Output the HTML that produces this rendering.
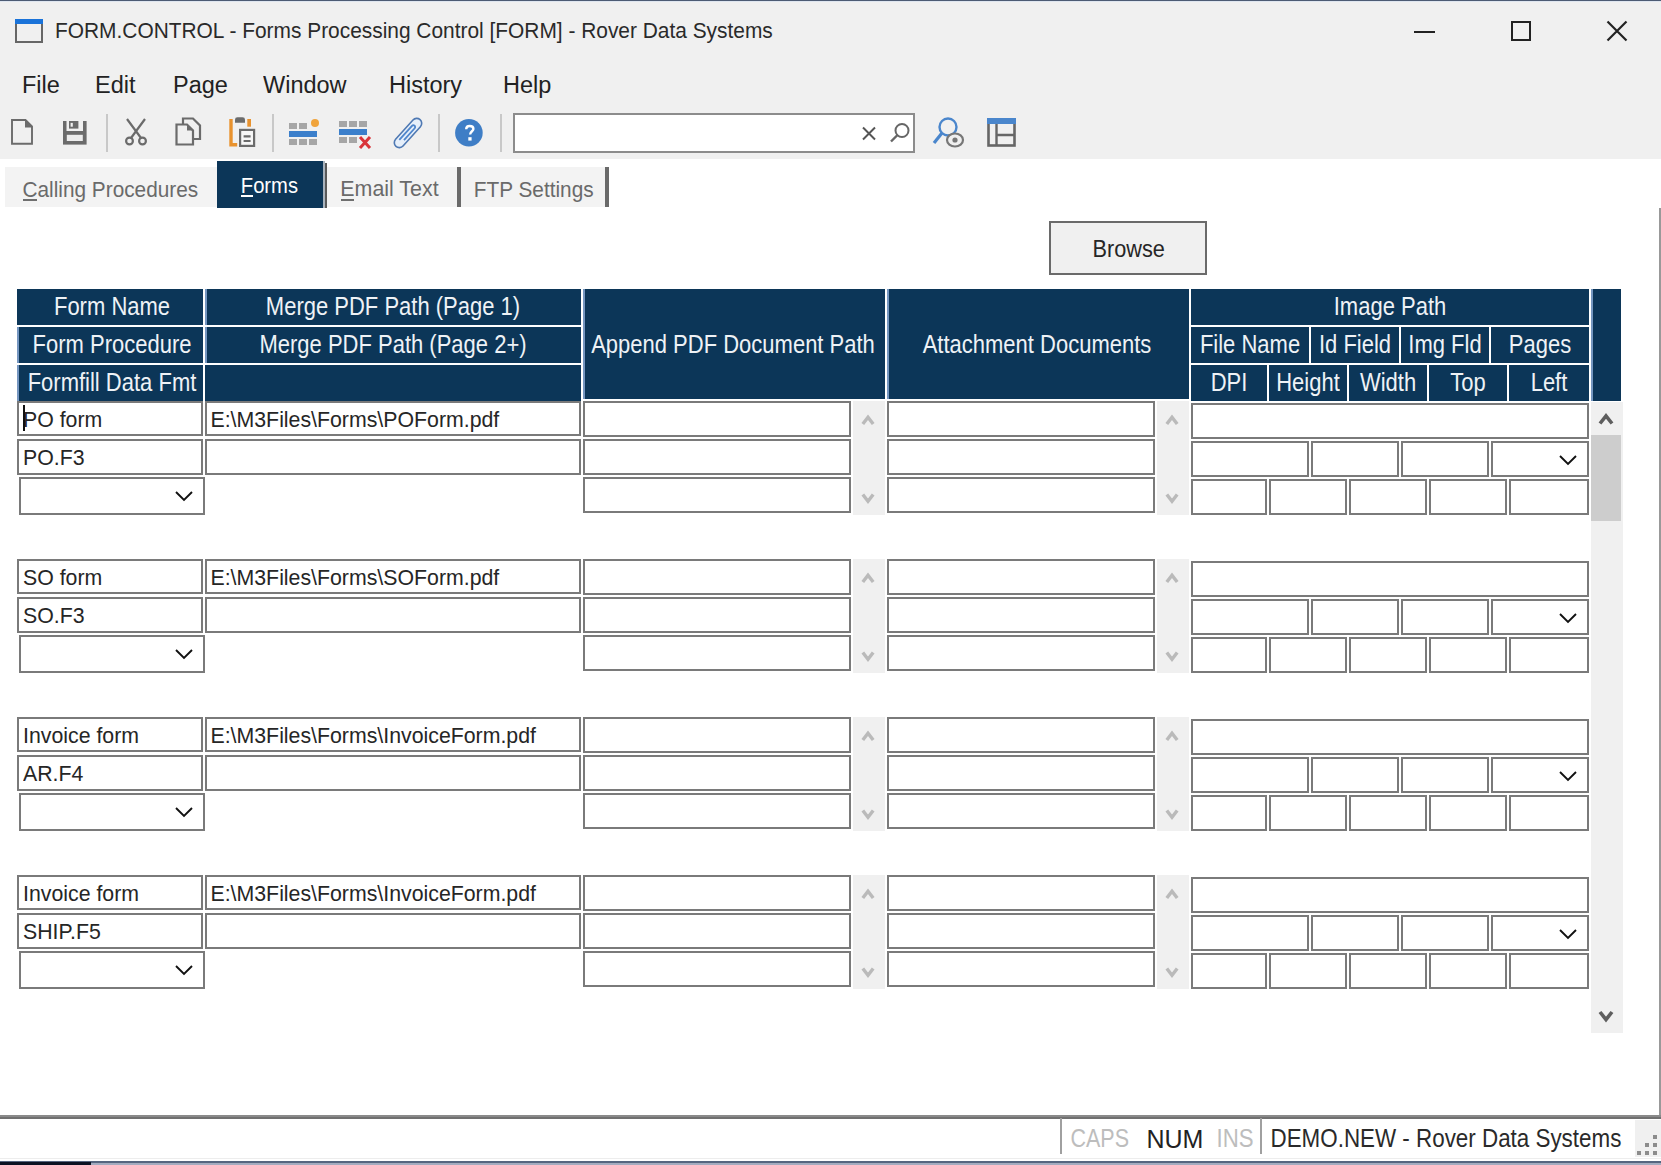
<!DOCTYPE html>
<html><head><meta charset="utf-8"><style>
html,body{margin:0;padding:0}
body{width:1661px;height:1165px;position:relative;overflow:hidden;background:#fff;font-family:"Liberation Sans", sans-serif}
body>div,body>svg{position:absolute}
.t{white-space:pre}
</style></head><body>
<div style="left:0px;top:0px;width:1661px;height:159px;background:#f0f0f0"></div>
<div style="left:0px;top:0px;width:1661px;height:1px;background:#4d5b74"></div>
<div style="left:0px;top:1px;width:1661px;height:1px;background:#dfe6f0"></div>
<div style="left:15px;top:19px;width:28px;height:24px;box-sizing:border-box;border:2px solid #666;background:#f0f0f0"></div>
<div style="left:15px;top:19px;width:28px;height:5px;background:#1a73d9"></div>
<div class="t" style="left:55px;top:21.11px;font-size:20.9px;line-height:20.9px;color:#2a2a2a;transform:scaleY(1.05);transform-origin:50% 84.65%;">FORM.CONTROL - Forms Processing Control [FORM] - Rover Data Systems</div>
<div style="left:1414px;top:31px;width:21px;height:2px;background:#222"></div>
<div style="left:1511px;top:21px;width:20px;height:20px;box-sizing:border-box;border:2px solid #222"></div>
<svg style="left:1606px;top:20px" width="22" height="22" viewBox="0 0 22 22"><path d="M1.5 1.5L20.5 20.5M20.5 1.5L1.5 20.5" stroke="#222" stroke-width="2.2"/></svg>
<div class="t" style="left:22px;top:73.91px;font-size:23.5px;line-height:23.5px;color:#222;transform:scaleY(1.03);transform-origin:50% 84.65%;">File</div>
<div class="t" style="left:95px;top:73.91px;font-size:23.5px;line-height:23.5px;color:#222;transform:scaleY(1.03);transform-origin:50% 84.65%;">Edit</div>
<div class="t" style="left:173px;top:73.91px;font-size:23.5px;line-height:23.5px;color:#222;transform:scaleY(1.03);transform-origin:50% 84.65%;">Page</div>
<div class="t" style="left:263px;top:73.91px;font-size:23.5px;line-height:23.5px;color:#222;transform:scaleY(1.03);transform-origin:50% 84.65%;">Window</div>
<div class="t" style="left:389px;top:73.91px;font-size:23.5px;line-height:23.5px;color:#222;transform:scaleY(1.03);transform-origin:50% 84.65%;">History</div>
<div class="t" style="left:503px;top:73.91px;font-size:23.5px;line-height:23.5px;color:#222;transform:scaleY(1.03);transform-origin:50% 84.65%;">Help</div>
<div style="left:106px;top:114px;width:2px;height:38px;background:#c8c8c8"></div>
<div style="left:272px;top:114px;width:2px;height:38px;background:#c8c8c8"></div>
<div style="left:438px;top:114px;width:2px;height:38px;background:#c8c8c8"></div>
<div style="left:500px;top:114px;width:2px;height:38px;background:#c8c8c8"></div>
<svg style="left:11px;top:119px" width="23" height="26" viewBox="0 0 23 26"><path d="M1 1H14.5L21 7.5V24.8H1Z" fill="none" stroke="#6b6b6b" stroke-width="1.9"/><path d="M14 1L21.5 8.5H14Z" fill="#6b6b6b"/></svg>
<svg style="left:63px;top:121px" width="24" height="24" viewBox="0 0 24 24"><rect x="0" y="0" width="23.6" height="23.6" fill="#6b6b6b"/><rect x="3.5" y="0" width="16.5" height="10" fill="#f0f0f0"/><rect x="6" y="0" width="9.4" height="7.6" fill="#6b6b6b"/><rect x="7.6" y="1.9" width="2.2" height="3.8" fill="#f0f0f0"/><rect x="3.8" y="13.8" width="16" height="6.2" fill="#ececec"/></svg>
<svg style="left:122px;top:118px" width="28" height="28" viewBox="0 0 28 28"><path d="M5 1L19 20M23 1L9 20" stroke="#6b6b6b" stroke-width="2.2"/><circle cx="7.5" cy="23" r="3.4" fill="#f0f0f0" stroke="#6b6b6b" stroke-width="2.2"/><circle cx="20.5" cy="23" r="3.4" fill="#f0f0f0" stroke="#6b6b6b" stroke-width="2.2"/></svg>
<svg style="left:175px;top:117px" width="27" height="29" viewBox="0 0 27 29"><path d="M8 1.5H18L25 8.5V22H8Z" fill="#f0f0f0" stroke="#6b6b6b" stroke-width="2.2"/><path d="M1.5 7.5H12L18 13.5V27.5H1.5Z" fill="#f0f0f0" stroke="#6b6b6b" stroke-width="2.2"/><path d="M12 7.5V13.5H18Z" fill="#6b6b6b"/></svg>
<svg style="left:228px;top:117px" width="29" height="31" viewBox="0 0 29 31"><path d="M3 2V27.8H9.2" fill="none" stroke="#e8922e" stroke-width="3.4"/><rect x="19.3" y="2" width="3.7" height="7.7" fill="#e8922e"/><path d="M7 5.8V2.6Q7 0.2 9.5 0.2H14.5Q17 0.2 17 2.6V5.8Z" fill="#6b6b6b"/><rect x="12.1" y="12.9" width="14" height="16" fill="#f7f7f7" stroke="#6b6b6b" stroke-width="2.2"/><path d="M15.6 19.3H22.6M15.6 24H22.6" stroke="#6b6b6b" stroke-width="2.2"/></svg>
<svg style="left:289px;top:119px" width="31" height="27" viewBox="0 0 31 27"><rect x="0" y="4" width="8" height="6" fill="#a6a6a6"/><rect x="10" y="4" width="8" height="6" fill="#a6a6a6"/><circle cx="26" cy="4" r="4" fill="#f0a43c"/><rect x="0" y="12" width="28" height="6" fill="#3b7fcb"/><rect x="0" y="20" width="8" height="6" fill="#a6a6a6"/><rect x="10" y="20" width="8" height="6" fill="#a6a6a6"/><rect x="20" y="20" width="8" height="6" fill="#a6a6a6"/></svg>
<svg style="left:339px;top:121px" width="33" height="28" viewBox="0 0 33 28"><rect x="0" y="0" width="8" height="6" fill="#a6a6a6"/><rect x="10" y="0" width="8" height="6" fill="#a6a6a6"/><rect x="20" y="0" width="8" height="6" fill="#a6a6a6"/><rect x="0" y="8" width="28" height="6" fill="#3b7fcb"/><rect x="0" y="16" width="8" height="6" fill="#a6a6a6"/><rect x="10" y="16" width="8" height="6" fill="#a6a6a6"/><path d="M21 16L31 27M31 16L21 27" stroke="#d9343a" stroke-width="3"/></svg>
<svg style="left:392px;top:116px" width="32" height="34" viewBox="0 0 32 34"><g transform="rotate(42 16 17)"><rect x="11" y="-1" width="10" height="36" rx="5" fill="#e6effa" stroke="#4f79b3" stroke-width="1.6"/><path d="M14.2 28V9A1.8 1.8 0 0 1 17.8 9V25" fill="none" stroke="#4f86cc" stroke-width="1.8"/></g></svg>
<svg style="left:454px;top:118px" width="30" height="30" viewBox="0 0 30 30"><circle cx="14.9" cy="14.8" r="13.8" fill="#3f7ec6"/><path d="M12.2 11.2C12.2 8.9 13.6 8 15.7 8C18.1 8 19.4 9.3 19.4 10.9C19.4 13.2 16.1 13.4 16.1 16.6" fill="none" stroke="#fff" stroke-width="2.4"/><rect x="14.3" y="19.2" width="3.3" height="3.4" fill="#fff"/></svg>
<div style="left:513px;top:113px;width:402px;height:40px;box-sizing:border-box;border:2px solid #8c8c8c;background:#fff"></div>
<svg style="left:861px;top:126px" width="16" height="15" viewBox="0 0 16 15"><path d="M2 1.5L14 13.5M14 1.5L2 13.5" stroke="#555" stroke-width="2"/></svg>
<svg style="left:889px;top:122px" width="22" height="22" viewBox="0 0 22 22"><circle cx="13" cy="8.5" r="6.5" fill="none" stroke="#666" stroke-width="2"/><path d="M8.5 13L2 19.5" stroke="#666" stroke-width="2.4"/></svg>
<svg style="left:932px;top:116px" width="34" height="32" viewBox="0 0 34 32"><circle cx="16" cy="11" r="8.5" fill="none" stroke="#4a86cc" stroke-width="2.4"/><path d="M10 17L2 27" stroke="#4a86cc" stroke-width="3.2"/><ellipse cx="23" cy="24" rx="8" ry="6.5" fill="#f0f0f0" stroke="#777" stroke-width="2.2"/><circle cx="23" cy="24" r="2.6" fill="#777"/></svg>
<svg style="left:987px;top:118px" width="29" height="29" viewBox="0 0 29 29"><rect x="1.5" y="1.5" width="26" height="26" fill="none" stroke="#666" stroke-width="2.6"/><rect x="0" y="0" width="29" height="6" fill="#4a86cc"/><path d="M9.5 6V28M9.5 17H28" stroke="#666" stroke-width="2.4"/></svg>
<div style="left:5px;top:167px;width:212px;height:40px;background:#f3f3f3"></div>
<div class="t" style="left:22.5px;top:179.79px;font-size:20.8px;line-height:20.8px;color:#6a6a6a;transform:scaleY(1.07);transform-origin:50% 84.65%;">Calling Procedures</div>
<div style="left:23px;top:199px;width:14px;height:2px;background:#6f6f6f"></div>
<div style="left:217px;top:161px;width:106px;height:47px;background:#0c3658"></div>
<div style="left:323px;top:161px;width:1.5px;height:47px;background:#a9b3bd"></div>
<div style="left:324.5px;top:163px;width:2.5px;height:45px;background:#5a5a5a"></div>
<div class="t" style="left:240.8px;top:175.70px;font-size:20.2px;line-height:20.2px;color:#fff;transform:scaleY(1.12);transform-origin:50% 84.65%;">Forms</div>
<div style="left:241px;top:195px;width:12px;height:2px;background:#fff"></div>
<div style="left:327px;top:167px;width:130px;height:40px;background:#f3f3f3"></div>
<div style="left:457px;top:167px;width:4px;height:40px;background:#6a6a6a"></div>
<div class="t" style="left:340.3px;top:179.28px;font-size:21.4px;line-height:21.4px;color:#6a6a6a;transform:scaleY(1.07);transform-origin:50% 84.65%;">Email Text</div>
<div style="left:341px;top:199px;width:13px;height:2px;background:#6f6f6f"></div>
<div style="left:461px;top:167px;width:144px;height:40px;background:#f3f3f3"></div>
<div style="left:605px;top:167px;width:4px;height:40px;background:#6a6a6a"></div>
<div class="t" style="left:473.8px;top:179.79px;font-size:20.8px;line-height:20.8px;color:#6a6a6a;transform:scaleY(1.07);transform-origin:50% 84.65%;">FTP Settings</div>
<div style="left:1659px;top:208px;width:2px;height:910px;background:#999"></div>
<div style="left:1049px;top:221px;width:158px;height:54px;box-sizing:border-box;border:2px solid #6a6a6a;background:#f0f0f0"></div>
<div class="t" style="left:1092.6px;top:239.13px;font-size:21.7px;line-height:21.7px;color:#262626;transform:scaleY(1.13);transform-origin:50% 84.65%;">Browse</div>
<div style="left:17px;top:289px;width:186px;height:36px;background:#0c3658"></div>
<div style="left:17px;top:327px;width:186px;height:36px;background:#0c3658"></div>
<div style="left:17px;top:365px;width:186px;height:36px;background:#0c3658"></div>
<div style="left:205px;top:289px;width:376px;height:36px;background:#0c3658"></div>
<div style="left:205px;top:327px;width:376px;height:36px;background:#0c3658"></div>
<div style="left:205px;top:365px;width:376px;height:36px;background:#0c3658"></div>
<div style="left:583px;top:289px;width:302px;height:110px;background:#0c3658"></div>
<div style="left:887px;top:289px;width:302px;height:110px;background:#0c3658"></div>
<div style="left:1191px;top:289px;width:398px;height:36px;background:#0c3658"></div>
<div style="left:1191px;top:327px;width:118px;height:36px;background:#0c3658"></div>
<div style="left:1311px;top:327px;width:88px;height:36px;background:#0c3658"></div>
<div style="left:1401px;top:327px;width:88px;height:36px;background:#0c3658"></div>
<div style="left:1491px;top:327px;width:98px;height:36px;background:#0c3658"></div>
<div style="left:1191px;top:365px;width:76px;height:36px;background:#0c3658"></div>
<div style="left:1269px;top:365px;width:78px;height:36px;background:#0c3658"></div>
<div style="left:1349px;top:365px;width:78px;height:36px;background:#0c3658"></div>
<div style="left:1429px;top:365px;width:78px;height:36px;background:#0c3658"></div>
<div style="left:1509px;top:365px;width:80px;height:36px;background:#0c3658"></div>
<div style="left:1591px;top:289px;width:30px;height:112px;background:#0c3658"></div>
<div style="left:17px;top:327px;width:2px;height:36px;background:#7596c0"></div>
<div style="left:17px;top:365px;width:2px;height:36px;background:#7596c0"></div>
<div style="left:205px;top:289px;width:2px;height:36px;background:#7596c0"></div>
<div style="left:205px;top:327px;width:2px;height:36px;background:#7596c0"></div>
<div style="left:583px;top:289px;width:2px;height:110px;background:#7596c0"></div>
<div style="left:887px;top:289px;width:2px;height:110px;background:#7596c0"></div>
<div style="left:1591px;top:289px;width:2px;height:112px;background:#7596c0"></div>
<div class="t" style="left:-288px;width:800px;text-align:center;top:297.18px;font-size:22px;line-height:22px;color:#eef2f6;transform:scaleY(1.15);transform-origin:50% 84.65%;">Form Name</div>
<div class="t" style="left:-288px;width:800px;text-align:center;top:334.98px;font-size:22px;line-height:22px;color:#eef2f6;transform:scaleY(1.15);transform-origin:50% 84.65%;">Form Procedure</div>
<div class="t" style="left:-288px;width:800px;text-align:center;top:372.98px;font-size:22px;line-height:22px;color:#eef2f6;transform:scaleY(1.15);transform-origin:50% 84.65%;">Formfill Data Fmt</div>
<div class="t" style="left:-7px;width:800px;text-align:center;top:297.18px;font-size:22px;line-height:22px;color:#eef2f6;transform:scaleY(1.15);transform-origin:50% 84.65%;">Merge PDF Path (Page 1)</div>
<div class="t" style="left:-7px;width:800px;text-align:center;top:334.98px;font-size:22px;line-height:22px;color:#eef2f6;transform:scaleY(1.15);transform-origin:50% 84.65%;">Merge PDF Path (Page 2+)</div>
<div class="t" style="left:333px;width:800px;text-align:center;top:334.98px;font-size:22px;line-height:22px;color:#eef2f6;transform:scaleY(1.15);transform-origin:50% 84.65%;">Append PDF Document Path</div>
<div class="t" style="left:637px;width:800px;text-align:center;top:334.98px;font-size:22px;line-height:22px;color:#eef2f6;transform:scaleY(1.15);transform-origin:50% 84.65%;">Attachment Documents</div>
<div class="t" style="left:990px;width:800px;text-align:center;top:297.18px;font-size:22px;line-height:22px;color:#eef2f6;transform:scaleY(1.15);transform-origin:50% 84.65%;">Image Path</div>
<div class="t" style="left:850px;width:800px;text-align:center;top:334.98px;font-size:22px;line-height:22px;color:#eef2f6;transform:scaleY(1.15);transform-origin:50% 84.65%;">File Name</div>
<div class="t" style="left:955px;width:800px;text-align:center;top:334.98px;font-size:22px;line-height:22px;color:#eef2f6;transform:scaleY(1.15);transform-origin:50% 84.65%;">Id Field</div>
<div class="t" style="left:1045px;width:800px;text-align:center;top:334.98px;font-size:22px;line-height:22px;color:#eef2f6;transform:scaleY(1.15);transform-origin:50% 84.65%;">Img Fld</div>
<div class="t" style="left:1140px;width:800px;text-align:center;top:334.98px;font-size:22px;line-height:22px;color:#eef2f6;transform:scaleY(1.15);transform-origin:50% 84.65%;">Pages</div>
<div class="t" style="left:829px;width:800px;text-align:center;top:372.98px;font-size:22px;line-height:22px;color:#eef2f6;transform:scaleY(1.15);transform-origin:50% 84.65%;">DPI</div>
<div class="t" style="left:908px;width:800px;text-align:center;top:372.98px;font-size:22px;line-height:22px;color:#eef2f6;transform:scaleY(1.15);transform-origin:50% 84.65%;">Height</div>
<div class="t" style="left:988px;width:800px;text-align:center;top:372.98px;font-size:22px;line-height:22px;color:#eef2f6;transform:scaleY(1.15);transform-origin:50% 84.65%;">Width</div>
<div class="t" style="left:1068px;width:800px;text-align:center;top:372.98px;font-size:22px;line-height:22px;color:#eef2f6;transform:scaleY(1.15);transform-origin:50% 84.65%;">Top</div>
<div class="t" style="left:1149px;width:800px;text-align:center;top:372.98px;font-size:22px;line-height:22px;color:#eef2f6;transform:scaleY(1.15);transform-origin:50% 84.65%;">Left</div>
<div style="left:17px;top:401px;width:186px;height:35px;box-sizing:border-box;border:2px solid #7a7a7a;background:#fff"></div>
<div style="left:17px;top:439px;width:186px;height:36px;box-sizing:border-box;border:2px solid #7a7a7a;background:#fff"></div>
<div style="left:19px;top:477px;width:186px;height:38px;box-sizing:border-box;border:2px solid #7a7a7a;background:#fff"></div>
<svg style="left:175px;top:491px" width="18" height="11" viewBox="0 0 18 11"><path d="M1 1L9.0 9L17 1" fill="none" stroke="#111" stroke-width="1.9"/></svg>
<div style="left:205px;top:401px;width:376px;height:35px;box-sizing:border-box;border:2px solid #7a7a7a;background:#fff"></div>
<div style="left:205px;top:439px;width:376px;height:36px;box-sizing:border-box;border:2px solid #7a7a7a;background:#fff"></div>
<div class="t" style="left:23px;top:409.77px;font-size:21.3px;line-height:21.3px;color:#262626;transform:scaleY(1.05);transform-origin:50% 84.65%;">PO form</div>
<div class="t" style="left:23px;top:447.77px;font-size:21.3px;line-height:21.3px;color:#262626;transform:scaleY(1.05);transform-origin:50% 84.65%;">PO.F3</div>
<div class="t" style="left:210.5px;top:409.77px;font-size:21.3px;line-height:21.3px;color:#262626;transform:scaleY(1.05);transform-origin:50% 84.65%;">E:\M3Files\Forms\POForm.pdf</div>
<div style="left:583px;top:401px;width:268px;height:36px;box-sizing:border-box;border:2px solid #7a7a7a;background:#fff"></div>
<div style="left:583px;top:439px;width:268px;height:36px;box-sizing:border-box;border:2px solid #7a7a7a;background:#fff"></div>
<div style="left:583px;top:477px;width:268px;height:36px;box-sizing:border-box;border:2px solid #7a7a7a;background:#fff"></div>
<div style="left:853px;top:401px;width:32px;height:114px;background:#f0f0f0"></div>
<svg style="left:861px;top:413px" width="14" height="13" viewBox="0 0 14 13"><path d="M1.8 11L7 4.2L12.2 11" fill="none" stroke="#bababa" stroke-width="3.4"/></svg>
<svg style="left:861px;top:493px" width="14" height="13" viewBox="0 0 14 13"><path d="M1.8 1.5L7 8.3L12.2 1.5" fill="none" stroke="#bababa" stroke-width="3.4"/></svg>
<div style="left:887px;top:401px;width:268px;height:36px;box-sizing:border-box;border:2px solid #7a7a7a;background:#fff"></div>
<div style="left:887px;top:439px;width:268px;height:36px;box-sizing:border-box;border:2px solid #7a7a7a;background:#fff"></div>
<div style="left:887px;top:477px;width:268px;height:36px;box-sizing:border-box;border:2px solid #7a7a7a;background:#fff"></div>
<div style="left:1157px;top:401px;width:32px;height:114px;background:#f0f0f0"></div>
<svg style="left:1165px;top:413px" width="14" height="13" viewBox="0 0 14 13"><path d="M1.8 11L7 4.2L12.2 11" fill="none" stroke="#bababa" stroke-width="3.4"/></svg>
<svg style="left:1165px;top:493px" width="14" height="13" viewBox="0 0 14 13"><path d="M1.8 1.5L7 8.3L12.2 1.5" fill="none" stroke="#bababa" stroke-width="3.4"/></svg>
<div style="left:1191px;top:403px;width:398px;height:36px;box-sizing:border-box;border:2px solid #7a7a7a;background:#fff"></div>
<div style="left:1191px;top:441px;width:118px;height:36px;box-sizing:border-box;border:2px solid #7a7a7a;background:#fff"></div>
<div style="left:1311px;top:441px;width:88px;height:36px;box-sizing:border-box;border:2px solid #7a7a7a;background:#fff"></div>
<div style="left:1401px;top:441px;width:88px;height:36px;box-sizing:border-box;border:2px solid #7a7a7a;background:#fff"></div>
<div style="left:1491px;top:441px;width:98px;height:36px;box-sizing:border-box;border:2px solid #7a7a7a;background:#fff"></div>
<svg style="left:1559px;top:455px" width="18" height="11" viewBox="0 0 18 11"><path d="M1 1L9.0 9L17 1" fill="none" stroke="#111" stroke-width="1.9"/></svg>
<div style="left:1191px;top:479px;width:76px;height:36px;box-sizing:border-box;border:2px solid #7a7a7a;background:#fff"></div>
<div style="left:1269px;top:479px;width:78px;height:36px;box-sizing:border-box;border:2px solid #7a7a7a;background:#fff"></div>
<div style="left:1349px;top:479px;width:78px;height:36px;box-sizing:border-box;border:2px solid #7a7a7a;background:#fff"></div>
<div style="left:1429px;top:479px;width:78px;height:36px;box-sizing:border-box;border:2px solid #7a7a7a;background:#fff"></div>
<div style="left:1509px;top:479px;width:80px;height:36px;box-sizing:border-box;border:2px solid #7a7a7a;background:#fff"></div>
<div style="left:17px;top:559px;width:186px;height:35px;box-sizing:border-box;border:2px solid #7a7a7a;background:#fff"></div>
<div style="left:17px;top:597px;width:186px;height:36px;box-sizing:border-box;border:2px solid #7a7a7a;background:#fff"></div>
<div style="left:19px;top:635px;width:186px;height:38px;box-sizing:border-box;border:2px solid #7a7a7a;background:#fff"></div>
<svg style="left:175px;top:649px" width="18" height="11" viewBox="0 0 18 11"><path d="M1 1L9.0 9L17 1" fill="none" stroke="#111" stroke-width="1.9"/></svg>
<div style="left:205px;top:559px;width:376px;height:35px;box-sizing:border-box;border:2px solid #7a7a7a;background:#fff"></div>
<div style="left:205px;top:597px;width:376px;height:36px;box-sizing:border-box;border:2px solid #7a7a7a;background:#fff"></div>
<div class="t" style="left:23px;top:567.77px;font-size:21.3px;line-height:21.3px;color:#262626;transform:scaleY(1.05);transform-origin:50% 84.65%;">SO form</div>
<div class="t" style="left:23px;top:605.77px;font-size:21.3px;line-height:21.3px;color:#262626;transform:scaleY(1.05);transform-origin:50% 84.65%;">SO.F3</div>
<div class="t" style="left:210.5px;top:567.77px;font-size:21.3px;line-height:21.3px;color:#262626;transform:scaleY(1.05);transform-origin:50% 84.65%;">E:\M3Files\Forms\SOForm.pdf</div>
<div style="left:583px;top:559px;width:268px;height:36px;box-sizing:border-box;border:2px solid #7a7a7a;background:#fff"></div>
<div style="left:583px;top:597px;width:268px;height:36px;box-sizing:border-box;border:2px solid #7a7a7a;background:#fff"></div>
<div style="left:583px;top:635px;width:268px;height:36px;box-sizing:border-box;border:2px solid #7a7a7a;background:#fff"></div>
<div style="left:853px;top:559px;width:32px;height:114px;background:#f0f0f0"></div>
<svg style="left:861px;top:571px" width="14" height="13" viewBox="0 0 14 13"><path d="M1.8 11L7 4.2L12.2 11" fill="none" stroke="#bababa" stroke-width="3.4"/></svg>
<svg style="left:861px;top:651px" width="14" height="13" viewBox="0 0 14 13"><path d="M1.8 1.5L7 8.3L12.2 1.5" fill="none" stroke="#bababa" stroke-width="3.4"/></svg>
<div style="left:887px;top:559px;width:268px;height:36px;box-sizing:border-box;border:2px solid #7a7a7a;background:#fff"></div>
<div style="left:887px;top:597px;width:268px;height:36px;box-sizing:border-box;border:2px solid #7a7a7a;background:#fff"></div>
<div style="left:887px;top:635px;width:268px;height:36px;box-sizing:border-box;border:2px solid #7a7a7a;background:#fff"></div>
<div style="left:1157px;top:559px;width:32px;height:114px;background:#f0f0f0"></div>
<svg style="left:1165px;top:571px" width="14" height="13" viewBox="0 0 14 13"><path d="M1.8 11L7 4.2L12.2 11" fill="none" stroke="#bababa" stroke-width="3.4"/></svg>
<svg style="left:1165px;top:651px" width="14" height="13" viewBox="0 0 14 13"><path d="M1.8 1.5L7 8.3L12.2 1.5" fill="none" stroke="#bababa" stroke-width="3.4"/></svg>
<div style="left:1191px;top:561px;width:398px;height:36px;box-sizing:border-box;border:2px solid #7a7a7a;background:#fff"></div>
<div style="left:1191px;top:599px;width:118px;height:36px;box-sizing:border-box;border:2px solid #7a7a7a;background:#fff"></div>
<div style="left:1311px;top:599px;width:88px;height:36px;box-sizing:border-box;border:2px solid #7a7a7a;background:#fff"></div>
<div style="left:1401px;top:599px;width:88px;height:36px;box-sizing:border-box;border:2px solid #7a7a7a;background:#fff"></div>
<div style="left:1491px;top:599px;width:98px;height:36px;box-sizing:border-box;border:2px solid #7a7a7a;background:#fff"></div>
<svg style="left:1559px;top:613px" width="18" height="11" viewBox="0 0 18 11"><path d="M1 1L9.0 9L17 1" fill="none" stroke="#111" stroke-width="1.9"/></svg>
<div style="left:1191px;top:637px;width:76px;height:36px;box-sizing:border-box;border:2px solid #7a7a7a;background:#fff"></div>
<div style="left:1269px;top:637px;width:78px;height:36px;box-sizing:border-box;border:2px solid #7a7a7a;background:#fff"></div>
<div style="left:1349px;top:637px;width:78px;height:36px;box-sizing:border-box;border:2px solid #7a7a7a;background:#fff"></div>
<div style="left:1429px;top:637px;width:78px;height:36px;box-sizing:border-box;border:2px solid #7a7a7a;background:#fff"></div>
<div style="left:1509px;top:637px;width:80px;height:36px;box-sizing:border-box;border:2px solid #7a7a7a;background:#fff"></div>
<div style="left:17px;top:717px;width:186px;height:35px;box-sizing:border-box;border:2px solid #7a7a7a;background:#fff"></div>
<div style="left:17px;top:755px;width:186px;height:36px;box-sizing:border-box;border:2px solid #7a7a7a;background:#fff"></div>
<div style="left:19px;top:793px;width:186px;height:38px;box-sizing:border-box;border:2px solid #7a7a7a;background:#fff"></div>
<svg style="left:175px;top:807px" width="18" height="11" viewBox="0 0 18 11"><path d="M1 1L9.0 9L17 1" fill="none" stroke="#111" stroke-width="1.9"/></svg>
<div style="left:205px;top:717px;width:376px;height:35px;box-sizing:border-box;border:2px solid #7a7a7a;background:#fff"></div>
<div style="left:205px;top:755px;width:376px;height:36px;box-sizing:border-box;border:2px solid #7a7a7a;background:#fff"></div>
<div class="t" style="left:23px;top:725.77px;font-size:21.3px;line-height:21.3px;color:#262626;transform:scaleY(1.05);transform-origin:50% 84.65%;">Invoice form</div>
<div class="t" style="left:23px;top:763.77px;font-size:21.3px;line-height:21.3px;color:#262626;transform:scaleY(1.05);transform-origin:50% 84.65%;">AR.F4</div>
<div class="t" style="left:210.5px;top:725.77px;font-size:21.3px;line-height:21.3px;color:#262626;transform:scaleY(1.05);transform-origin:50% 84.65%;">E:\M3Files\Forms\InvoiceForm.pdf</div>
<div style="left:583px;top:717px;width:268px;height:36px;box-sizing:border-box;border:2px solid #7a7a7a;background:#fff"></div>
<div style="left:583px;top:755px;width:268px;height:36px;box-sizing:border-box;border:2px solid #7a7a7a;background:#fff"></div>
<div style="left:583px;top:793px;width:268px;height:36px;box-sizing:border-box;border:2px solid #7a7a7a;background:#fff"></div>
<div style="left:853px;top:717px;width:32px;height:114px;background:#f0f0f0"></div>
<svg style="left:861px;top:729px" width="14" height="13" viewBox="0 0 14 13"><path d="M1.8 11L7 4.2L12.2 11" fill="none" stroke="#bababa" stroke-width="3.4"/></svg>
<svg style="left:861px;top:809px" width="14" height="13" viewBox="0 0 14 13"><path d="M1.8 1.5L7 8.3L12.2 1.5" fill="none" stroke="#bababa" stroke-width="3.4"/></svg>
<div style="left:887px;top:717px;width:268px;height:36px;box-sizing:border-box;border:2px solid #7a7a7a;background:#fff"></div>
<div style="left:887px;top:755px;width:268px;height:36px;box-sizing:border-box;border:2px solid #7a7a7a;background:#fff"></div>
<div style="left:887px;top:793px;width:268px;height:36px;box-sizing:border-box;border:2px solid #7a7a7a;background:#fff"></div>
<div style="left:1157px;top:717px;width:32px;height:114px;background:#f0f0f0"></div>
<svg style="left:1165px;top:729px" width="14" height="13" viewBox="0 0 14 13"><path d="M1.8 11L7 4.2L12.2 11" fill="none" stroke="#bababa" stroke-width="3.4"/></svg>
<svg style="left:1165px;top:809px" width="14" height="13" viewBox="0 0 14 13"><path d="M1.8 1.5L7 8.3L12.2 1.5" fill="none" stroke="#bababa" stroke-width="3.4"/></svg>
<div style="left:1191px;top:719px;width:398px;height:36px;box-sizing:border-box;border:2px solid #7a7a7a;background:#fff"></div>
<div style="left:1191px;top:757px;width:118px;height:36px;box-sizing:border-box;border:2px solid #7a7a7a;background:#fff"></div>
<div style="left:1311px;top:757px;width:88px;height:36px;box-sizing:border-box;border:2px solid #7a7a7a;background:#fff"></div>
<div style="left:1401px;top:757px;width:88px;height:36px;box-sizing:border-box;border:2px solid #7a7a7a;background:#fff"></div>
<div style="left:1491px;top:757px;width:98px;height:36px;box-sizing:border-box;border:2px solid #7a7a7a;background:#fff"></div>
<svg style="left:1559px;top:771px" width="18" height="11" viewBox="0 0 18 11"><path d="M1 1L9.0 9L17 1" fill="none" stroke="#111" stroke-width="1.9"/></svg>
<div style="left:1191px;top:795px;width:76px;height:36px;box-sizing:border-box;border:2px solid #7a7a7a;background:#fff"></div>
<div style="left:1269px;top:795px;width:78px;height:36px;box-sizing:border-box;border:2px solid #7a7a7a;background:#fff"></div>
<div style="left:1349px;top:795px;width:78px;height:36px;box-sizing:border-box;border:2px solid #7a7a7a;background:#fff"></div>
<div style="left:1429px;top:795px;width:78px;height:36px;box-sizing:border-box;border:2px solid #7a7a7a;background:#fff"></div>
<div style="left:1509px;top:795px;width:80px;height:36px;box-sizing:border-box;border:2px solid #7a7a7a;background:#fff"></div>
<div style="left:17px;top:875px;width:186px;height:35px;box-sizing:border-box;border:2px solid #7a7a7a;background:#fff"></div>
<div style="left:17px;top:913px;width:186px;height:36px;box-sizing:border-box;border:2px solid #7a7a7a;background:#fff"></div>
<div style="left:19px;top:951px;width:186px;height:38px;box-sizing:border-box;border:2px solid #7a7a7a;background:#fff"></div>
<svg style="left:175px;top:965px" width="18" height="11" viewBox="0 0 18 11"><path d="M1 1L9.0 9L17 1" fill="none" stroke="#111" stroke-width="1.9"/></svg>
<div style="left:205px;top:875px;width:376px;height:35px;box-sizing:border-box;border:2px solid #7a7a7a;background:#fff"></div>
<div style="left:205px;top:913px;width:376px;height:36px;box-sizing:border-box;border:2px solid #7a7a7a;background:#fff"></div>
<div class="t" style="left:23px;top:883.77px;font-size:21.3px;line-height:21.3px;color:#262626;transform:scaleY(1.05);transform-origin:50% 84.65%;">Invoice form</div>
<div class="t" style="left:23px;top:921.77px;font-size:21.3px;line-height:21.3px;color:#262626;transform:scaleY(1.05);transform-origin:50% 84.65%;">SHIP.F5</div>
<div class="t" style="left:210.5px;top:883.77px;font-size:21.3px;line-height:21.3px;color:#262626;transform:scaleY(1.05);transform-origin:50% 84.65%;">E:\M3Files\Forms\InvoiceForm.pdf</div>
<div style="left:583px;top:875px;width:268px;height:36px;box-sizing:border-box;border:2px solid #7a7a7a;background:#fff"></div>
<div style="left:583px;top:913px;width:268px;height:36px;box-sizing:border-box;border:2px solid #7a7a7a;background:#fff"></div>
<div style="left:583px;top:951px;width:268px;height:36px;box-sizing:border-box;border:2px solid #7a7a7a;background:#fff"></div>
<div style="left:853px;top:875px;width:32px;height:114px;background:#f0f0f0"></div>
<svg style="left:861px;top:887px" width="14" height="13" viewBox="0 0 14 13"><path d="M1.8 11L7 4.2L12.2 11" fill="none" stroke="#bababa" stroke-width="3.4"/></svg>
<svg style="left:861px;top:967px" width="14" height="13" viewBox="0 0 14 13"><path d="M1.8 1.5L7 8.3L12.2 1.5" fill="none" stroke="#bababa" stroke-width="3.4"/></svg>
<div style="left:887px;top:875px;width:268px;height:36px;box-sizing:border-box;border:2px solid #7a7a7a;background:#fff"></div>
<div style="left:887px;top:913px;width:268px;height:36px;box-sizing:border-box;border:2px solid #7a7a7a;background:#fff"></div>
<div style="left:887px;top:951px;width:268px;height:36px;box-sizing:border-box;border:2px solid #7a7a7a;background:#fff"></div>
<div style="left:1157px;top:875px;width:32px;height:114px;background:#f0f0f0"></div>
<svg style="left:1165px;top:887px" width="14" height="13" viewBox="0 0 14 13"><path d="M1.8 11L7 4.2L12.2 11" fill="none" stroke="#bababa" stroke-width="3.4"/></svg>
<svg style="left:1165px;top:967px" width="14" height="13" viewBox="0 0 14 13"><path d="M1.8 1.5L7 8.3L12.2 1.5" fill="none" stroke="#bababa" stroke-width="3.4"/></svg>
<div style="left:1191px;top:877px;width:398px;height:36px;box-sizing:border-box;border:2px solid #7a7a7a;background:#fff"></div>
<div style="left:1191px;top:915px;width:118px;height:36px;box-sizing:border-box;border:2px solid #7a7a7a;background:#fff"></div>
<div style="left:1311px;top:915px;width:88px;height:36px;box-sizing:border-box;border:2px solid #7a7a7a;background:#fff"></div>
<div style="left:1401px;top:915px;width:88px;height:36px;box-sizing:border-box;border:2px solid #7a7a7a;background:#fff"></div>
<div style="left:1491px;top:915px;width:98px;height:36px;box-sizing:border-box;border:2px solid #7a7a7a;background:#fff"></div>
<svg style="left:1559px;top:929px" width="18" height="11" viewBox="0 0 18 11"><path d="M1 1L9.0 9L17 1" fill="none" stroke="#111" stroke-width="1.9"/></svg>
<div style="left:1191px;top:953px;width:76px;height:36px;box-sizing:border-box;border:2px solid #7a7a7a;background:#fff"></div>
<div style="left:1269px;top:953px;width:78px;height:36px;box-sizing:border-box;border:2px solid #7a7a7a;background:#fff"></div>
<div style="left:1349px;top:953px;width:78px;height:36px;box-sizing:border-box;border:2px solid #7a7a7a;background:#fff"></div>
<div style="left:1429px;top:953px;width:78px;height:36px;box-sizing:border-box;border:2px solid #7a7a7a;background:#fff"></div>
<div style="left:1509px;top:953px;width:80px;height:36px;box-sizing:border-box;border:2px solid #7a7a7a;background:#fff"></div>
<div style="left:23px;top:405px;width:2px;height:26px;background:#111"></div>
<div style="left:1591px;top:402px;width:32px;height:631px;background:#f0f0f0"></div>
<div style="left:1591px;top:435px;width:30px;height:86px;background:#cdcdcd"></div>
<svg style="left:1598px;top:412px" width="16" height="14" viewBox="0 0 16 14"><path d="M2 11.5L8 4L14 11.5" fill="none" stroke="#5e5e5e" stroke-width="3.6"/></svg>
<svg style="left:1598px;top:1010px" width="16" height="14" viewBox="0 0 16 14"><path d="M2 2L8 9.5L14 2" fill="none" stroke="#5e5e5e" stroke-width="3.6"/></svg>
<div style="left:0px;top:1115px;width:1661px;height:2px;background:#8a8a8a"></div>
<div style="left:0px;top:1117px;width:1661px;height:2px;background:#707070"></div>
<div style="left:1060px;top:1118px;width:2px;height:36px;background:#a0a0a0"></div>
<div style="left:1260px;top:1118px;width:2px;height:36px;background:#a0a0a0"></div>
<div class="t" style="left:1070.5px;top:1129.60px;font-size:21.5px;line-height:21.5px;color:#bdbdbd;transform:scaleY(1.2);transform-origin:50% 84.65%;">CAPS</div>
<div class="t" style="left:1146.4px;top:1126.64px;font-size:25px;line-height:25px;color:#222;transform:scaleY(1.06);transform-origin:50% 84.65%;">NUM</div>
<div class="t" style="left:1216.5px;top:1129.01px;font-size:22.2px;line-height:22.2px;color:#bdbdbd;transform:scaleY(1.15);transform-origin:50% 84.65%;">INS</div>
<div class="t" style="left:1270.5px;top:1128.64px;font-size:22.4px;line-height:22.4px;color:#2a2a2a;transform:scaleY(1.14);transform-origin:50% 84.65%;">DEMO.NEW - Rover Data Systems</div>
<div style="left:1635px;top:1120px;width:26px;height:37px;background:#f0f0f0"></div>
<div style="left:1653px;top:1135px;width:4px;height:4px;background:#8c8c8c"></div>
<div style="left:1645px;top:1143px;width:4px;height:4px;background:#8c8c8c"></div>
<div style="left:1653px;top:1143px;width:4px;height:4px;background:#8c8c8c"></div>
<div style="left:1637px;top:1151px;width:4px;height:4px;background:#8c8c8c"></div>
<div style="left:1645px;top:1151px;width:4px;height:4px;background:#8c8c8c"></div>
<div style="left:1653px;top:1151px;width:4px;height:4px;background:#8c8c8c"></div>
<div style="left:0px;top:1158px;width:1661px;height:1px;background:#ededed"></div>
<div style="left:0px;top:1161px;width:1661px;height:4px;background:#a3abbf"></div>
<div style="left:0px;top:1161px;width:1661px;height:2px;background:#56657f"></div>
<div style="left:0px;top:1162px;width:91px;height:3px;background:#0b1222"></div>
</body></html>
